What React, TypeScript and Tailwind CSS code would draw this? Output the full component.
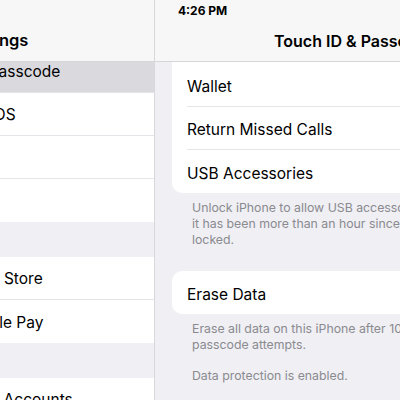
import React from "react";

const font = { fontFamily: "Inter, 'Noto Sans', sans-serif" };

// the left list is only partly in view, so each label is pushed past the left edge
function SideRow({ label, shift, selected, last }: { label: string; shift: string; selected?: boolean; last?: boolean }) {
  return (
    <div className={`h-[43px] flex ${selected ? "bg-[#d9d9de]" : "bg-white"}`}>
      <div className={`flex-1 flex items-center pt-[2px] text-[15.5px] text-black whitespace-nowrap ${last ? "" : "border-b border-[#e3e3e8]"}`}>
        <span className={shift}>{label}</span>
      </div>
    </div>
  );
}

function Row({ label, first, last }: { label: string; first?: boolean; last?: boolean }) {
  return (
    <div className={`${first ? "h-[45px] pt-[6px]" : "h-[43px] pt-[4px]"} pl-[15px] flex`}>
      <div className={`flex-1 flex items-center text-[15.5px] text-black whitespace-nowrap ${last ? "" : "border-b border-[#e3e3e8]"}`}>
        {label}
      </div>
    </div>
  );
}

export default function App() {
  return (
    <div className="relative w-[400px] h-[400px] overflow-hidden flex bg-[#efeff4]" style={font}>
      <div className="absolute z-20 top-[2px] left-[178px] text-[12px] font-bold text-black">4:26 PM</div>

      <aside className="w-[155px] shrink-0 flex flex-col border-r border-[#d8d8dc] bg-[#efeff4] overflow-hidden">
        <div className="relative z-10 h-[62px] shrink-0 bg-[#f7f7f7] border-b border-[#d6d6da] flex items-end pb-[8px]">
          <div className="-ml-[37px] text-[16.5px] font-semibold text-black whitespace-nowrap">Settings</div>
        </div>
        <div className="flex flex-col -mt-[12px]">
          <SideRow label="Touch ID & Passcode" shift="-ml-[95px]" selected />
          <SideRow label="Emergency SOS" shift="-ml-[103px]" />
          <SideRow label="Battery" shift="-ml-[95px]" />
          <SideRow label="Privacy" shift="-ml-[95px]" last />
          <div className="h-[35px]" />
          <SideRow label="iTunes & App Store" shift="-ml-[97px]" />
          <SideRow label="Wallet & Apple Pay" shift="-ml-[94px]" last />
          <div className="h-[35px]" />
          <SideRow label="Passwords & Accounts" shift="-ml-[95px]" />
        </div>
      </aside>

      <main className="flex-1 flex flex-col">
        <div className="h-[62px] shrink-0 bg-[#f7f7f7] border-b border-[#d6d6da] flex items-end pb-[8px] pl-[119px]">
          <div className="text-[16px] font-semibold text-black whitespace-nowrap">Touch ID &amp; Passcode</div>
        </div>
        <div className="pl-[17px] flex flex-col">
          <div className="bg-white rounded-b-[10px] -mr-[20px]">
            <Row label="Wallet" first />
            <Row label="Return Missed Calls" />
            <Row label="USB Accessories" last />
          </div>
          <p className="mt-[7px] pl-[20px] text-[12.3px] leading-[16px] text-[#8a8a8f] whitespace-nowrap">
            Unlock iPhone to allow USB accessories to connect when
            <br />
            it has been more than an hour since your iPhone was
            <br />
            locked.
          </p>
          <div className="mt-[23px] bg-white rounded-[10px] -mr-[20px]">
            <Row label="Erase Data" last />
          </div>
          <div className="mt-[7px] pl-[20px] text-[12.3px] leading-[16px] text-[#8a8a8f] whitespace-nowrap">
            <p>
              Erase all data on this iPhone after 10 failed
              <br />
              passcode attempts.
            </p>
            <p className="mt-[15px]">Data protection is enabled.</p>
          </div>
        </div>
      </main>
    </div>
  );
}
